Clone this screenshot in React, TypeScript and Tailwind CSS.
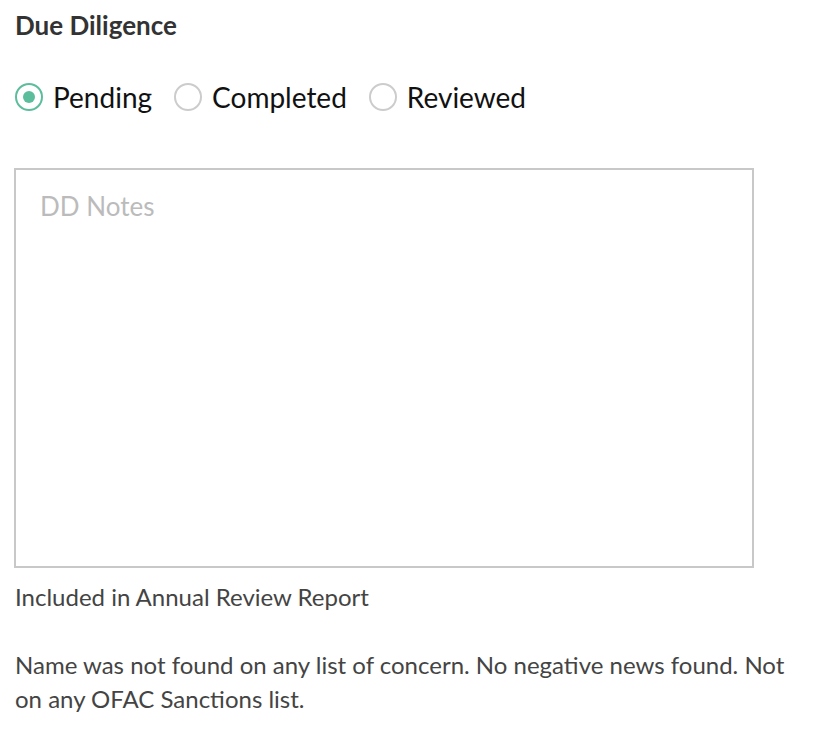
import React, { useState } from "react";

export default function App() {
  const [val, setVal] = useState("Pending");
  const opts = ["Pending", "Completed", "Reviewed"];
  return (
    <div className="min-h-screen bg-white px-[15px] pt-[9px]" style={{ fontFamily: "Lato, 'Noto Sans', sans-serif" }}>
      <h2 className="text-[26px] font-bold leading-[32px] text-[#333]">Due Diligence</h2>
      <div className="mt-[38px] flex items-center gap-[22px]">
        {opts.map((o) => (
          <label key={o} className="flex cursor-pointer items-center gap-[10px]" onClick={() => setVal(o)}>
            <span
              className={
                o === val
                  ? "flex h-[28px] w-[28px] items-center justify-center rounded-full border-2 border-[#5cbd9c]"
                  : "flex h-[28px] w-[28px] items-center justify-center rounded-full border-2 border-[#cccccc]"
              }
            >
              {o === val && <span className="h-[12px] w-[12px] rounded-full bg-[#5cbd9c]" />}
            </span>
            <span className="text-[28px] leading-[36px] text-[#111]">{o}</span>
          </label>
        ))}
      </div>
      <textarea
        placeholder="DD Notes"
        className="-ml-[1px] mt-[53px] block h-[400px] w-[740px] resize-none border-2 border-[#c8c8c8] px-[24px] py-[19px] text-[26px] leading-[34px] text-[#333] outline-none placeholder:text-[#bbbbbb]"
      />
      <p className="mt-[12px] text-[24px] leading-[34px] text-[#444]">Included in Annual Review Report</p>
      <p className="mt-[34px] w-[790px] text-[24px] leading-[34px] text-[#444]">
        Name was not found on any list of concern. No negative news found. Not on any OFAC Sanctions list.
      </p>
    </div>
  );
}
